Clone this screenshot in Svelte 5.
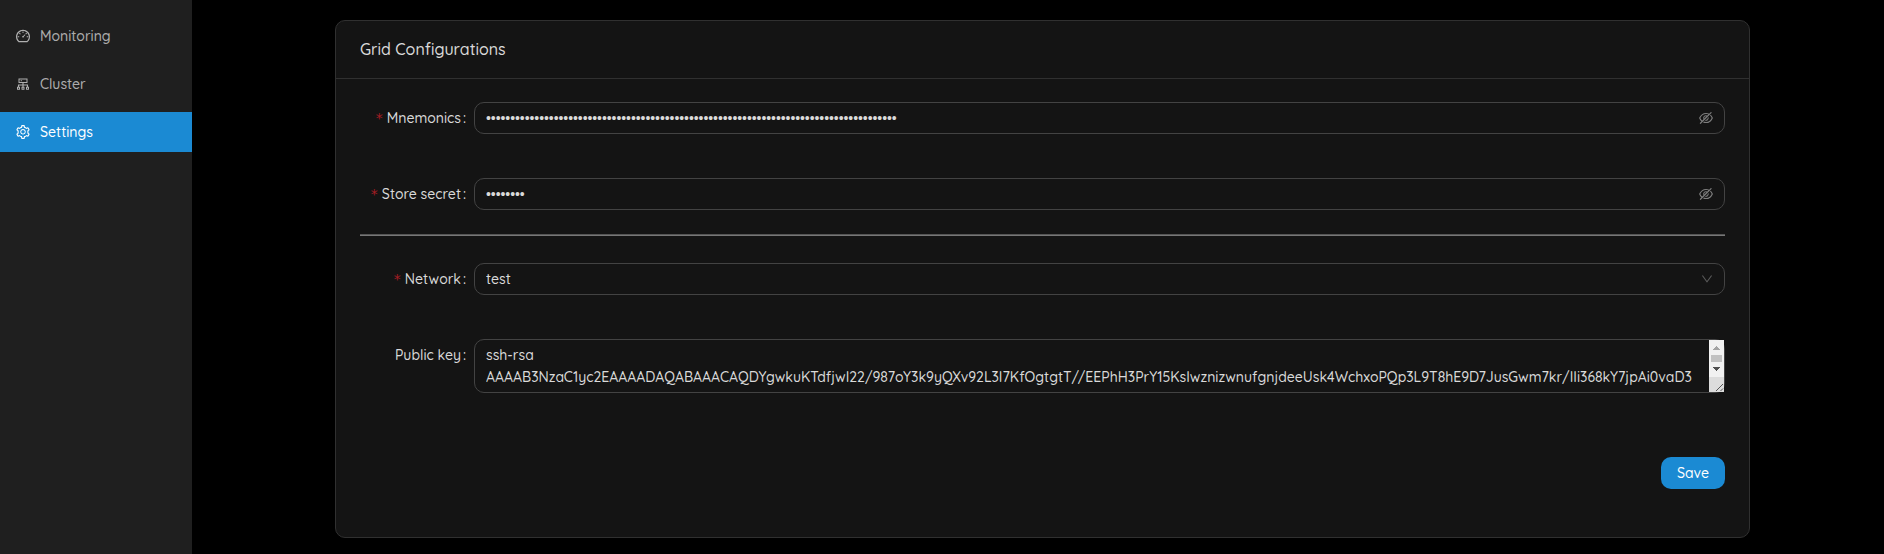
<script>
  const menu = [
    {
      label: 'Monitoring',
      path: 'M924.8 385.6a446.7 446.7 0 00-96-142.4 446.7 446.7 0 00-142.4-96C631.1 123.8 572.5 112 512 112s-119.1 11.8-174.4 35.2a446.7 446.7 0 00-142.4 96 446.7 446.7 0 00-96 142.4C75.8 440.9 64 499.5 64 560c0 132.7 58.3 257.7 159.9 343.1l1.7 1.4c5.8 4.8 13.1 7.5 20.6 7.5h531.7c7.5 0 14.8-2.7 20.6-7.5l1.7-1.4C901.7 817.7 960 692.7 960 560c0-60.5-11.9-119.1-35.2-174.4zM761.4 836H262.6A371.12 371.12 0 01140 560c0-99.4 38.7-192.8 109-263 70.3-70.3 163.7-109 263-109 99.4 0 192.8 38.7 263 109 70.3 70.3 109 163.7 109 263 0 105.6-44.5 205.5-122.6 276zM623.5 421.5a8.03 8.03 0 00-11.3 0L527.7 506c-18.7-5-39.4-.2-54.1 14.5a55.95 55.95 0 000 79.2 55.95 55.95 0 0079.2 0 55.87 55.87 0 0014.5-54.1l84.5-84.5c3.1-3.1 3.1-8.2 0-11.3l-28.3-28.3zM490 320h44c4.4 0 8-3.6 8-8v-80c0-4.4-3.6-8-8-8h-44c-4.4 0-8 3.6-8 8v80c0 4.4 3.6 8 8 8zm260 218v44c0 4.4 3.6 8 8 8h80c4.4 0 8-3.6 8-8v-44c0-4.4-3.6-8-8-8h-80c-4.4 0-8 3.6-8 8zm12.7-197.2l-31.1-31.1a8.03 8.03 0 00-11.3 0l-56.6 56.6a8.03 8.03 0 000 11.3l31.1 31.1c3.1 3.1 8.2 3.1 11.3 0l56.6-56.6c3.1-3.1 3.1-8.2 0-11.3zm-458.6-31.1a8.03 8.03 0 00-11.3 0l-31.1 31.1a8.03 8.03 0 000 11.3l56.6 56.6c3.1 3.1 8.2 3.1 11.3 0l31.1-31.1c3.1-3.1 3.1-8.2 0-11.3l-56.6-56.6zM262 530h-80c-4.4 0-8 3.6-8 8v44c0 4.4 3.6 8 8 8h80c4.4 0 8-3.6 8-8v-44c0-4.4-3.6-8-8-8z'
    },
    {
      label: 'Cluster',
      path: 'M888 680h-54V540H546v-92h238c8.8 0 16-7.2 16-16V168c0-8.8-7.2-16-16-16H240c-8.8 0-16 7.2-16 16v264c0 8.8 7.2 16 16 16h238v92H190v140h-54c-4.4 0-8 3.6-8 8v176c0 4.4 3.6 8 8 8h176c4.4 0 8-3.6 8-8V688c0-4.4-3.6-8-8-8h-54v-72h220v72h-54c-4.4 0-8 3.6-8 8v176c0 4.4 3.6 8 8 8h176c4.4 0 8-3.6 8-8V688c0-4.4-3.6-8-8-8h-54v-72h220v72h-54c-4.4 0-8 3.6-8 8v176c0 4.4 3.6 8 8 8h176c4.4 0 8-3.6 8-8V688c0-4.4-3.6-8-8-8zM256 808h-64v-64h64v64zm288 0h-64v-64h64v64zM288 384V216h448v168H288zm544 424h-64v-64h64v64zM360 300a40 40 0 1080 0 40 40 0 10-80 0z'
    },
    {
      label: 'Settings',
      active: true,
      path: 'M924.8 625.7l-65.5-56c3.1-19 4.7-38.4 4.7-57.8s-1.6-38.8-4.7-57.8l65.5-56a32.03 32.03 0 009.3-35.2l-.9-2.6a443.74 443.74 0 00-79.7-137.9l-1.8-2.1a32.12 32.12 0 00-35.1-9.5l-81.3 28.9c-30-24.6-63.5-44-99.7-57.6l-15.7-85a32.05 32.05 0 00-25.8-25.7l-2.7-.5c-52.1-9.4-106.9-9.4-159 0l-2.7.5a32.05 32.05 0 00-25.8 25.7l-15.8 85.4a351.86 351.86 0 00-99 57.4l-81.9-29.1a32 32 0 00-35.1 9.5l-1.8 2.1a446.02 446.02 0 00-79.7 137.9l-.9 2.6c-4.5 12.5-.8 26.5 9.3 35.2l66.3 56.6c-3.1 18.8-4.6 38-4.6 57.1 0 19.2 1.5 38.4 4.6 57.1L99 625.5a32.03 32.03 0 00-9.3 35.2l.9 2.6c18.1 50.4 44.9 96.9 79.7 137.9l1.8 2.1a32.12 32.12 0 0035.1 9.5l81.9-29.1c29.8 24.5 63.1 43.9 99 57.4l15.8 85.4a32.05 32.05 0 0025.8 25.7l2.7.5a449.4 449.4 0 00159 0l2.7-.5a32.05 32.05 0 0025.8-25.7l15.7-85a350 350 0 0099.7-57.6l81.3 28.9a32 32 0 0035.1-9.5l1.8-2.1c34.8-41.1 61.6-87.5 79.7-137.9l.9-2.6c4.5-12.3.8-26.3-9.3-35zM788.3 465.9c2.5 15.1 3.8 30.6 3.8 46.1s-1.3 31-3.8 46.1l-6.6 40.1 74.7 63.9a370.03 370.03 0 01-42.6 73.6L721 702.8l-31.4 25.8c-23.9 19.6-50.5 35-79.3 45.8l-38.1 14.3-17.9 97a377.5 377.5 0 01-85 0l-17.9-97.2-37.8-14.5c-28.5-10.8-55-26.2-78.7-45.7l-31.4-25.9-93.4 33.2c-17-22.9-31.2-47.6-42.6-73.6l75.5-64.5-6.5-40c-2.4-14.9-3.7-30.3-3.7-45.5 0-15.3 1.2-30.6 3.7-45.5l6.5-40-75.5-64.5c11.3-26.1 25.6-50.7 42.6-73.6l93.4 33.2 31.4-25.9c23.7-19.5 50.2-34.9 78.7-45.7l37.9-14.3 17.9-97.2c28.1-3.2 56.8-3.2 85 0l17.9 97 38.1 14.3c28.7 10.8 55.4 26.2 79.3 45.8l31.4 25.8 92.8-32.9c17 22.9 31.2 47.6 42.6 73.6L781.8 426l6.5 39.9zM512 326c-97.2 0-176 78.8-176 176s78.8 176 176 176 176-78.8 176-176-78.8-176-176-176zm79.2 255.2A111.6 111.6 0 01512 614c-29.9 0-58-11.7-79.2-32.8A111.6 111.6 0 01400 502c0-29.9 11.7-58 32.8-79.2C454 401.6 482.1 390 512 390c29.9 0 58 11.6 79.2 32.8A111.6 111.6 0 01624 502c0 29.9-11.7 58-32.8 79.2z'
    }
  ];
  const bullets = (n) => '•'.repeat(n);
</script>

{#snippet label(text, required)}
  <div class="label">
    {#if required}<span class="star">*</span>{/if}
    <span class="text">{text}</span><span class="colon">:</span>
  </div>
{/snippet}

{#snippet eye()}
  <svg class="eye" viewBox="64 64 896 896" width="14" height="14" fill="currentColor">
    <path d="M942.2 486.2Q889.47 375.11 816.7 305l-50.88 50.88C807.31 395.53 843.45 447.4 874.7 512 791.5 684.2 673.4 766 512 766q-72.67 0-133.87-22.38L323 798.75Q408 838 512 838q288.3 0 430.2-300.3a60.29 60.29 0 000-51.5zm-63.57-320.64L836 122.88a8 8 0 00-11.32 0L715.31 232.2Q624.86 186 512 186q-288.3 0-430.2 300.3a60.3 60.3 0 000 51.5q56.69 119.4 136.5 191.41L112.48 835a8 8 0 000 11.31L155.17 889a8 8 0 0011.31 0l712.15-712.12a8 8 0 000-11.32zM149.3 512C232.6 339.8 350.7 258 512 258c54.54 0 104.13 9.36 149.12 28.39l-70.3 70.3a176 176 0 00-238.13 238.13l-83.42 83.42C223.1 637.49 183.3 582.28 149.3 512zm246.7 0a112.11 112.11 0 01146.2-106.69L401.31 546.2A112 112 0 01396 512z" />
    <path d="M508 624c-3.46 0-6.87-.16-10.25-.47l-52.82 52.82a176.09 176.09 0 00227.42-227.42l-52.82 52.82c.31 3.38.47 6.79.47 10.25a111.94 111.94 0 01-112 112z" />
  </svg>
{/snippet}

<div class="layout">
  <nav>
    {#each menu as item}
      <div class="item" class:active={item.active}>
        <svg viewBox="64 64 896 896" width="14" height="14" fill="currentColor"><path d={item.path} /></svg>
        <span class="text">{item.label}</span>
      </div>
    {/each}
  </nav>
  <main>
    <section class="card">
      <header><span class="text">Grid Configurations</span></header>
      <div class="body">
        <div class="row">
          {@render label('Mnemonics', true)}
          <div class="field"><span class="dots">{bullets(85)}</span>{@render eye()}</div>
        </div>
        <div class="row secret">
          {@render label('Store secret', true)}
          <div class="field"><span class="dots">{bullets(8)}</span>{@render eye()}</div>
        </div>
        <div class="divider"></div>
        <div class="row network">
          {@render label('Network', true)}
          <div class="field">
            <span class="text">test</span>
            <svg class="down" viewBox="64 64 896 896" width="12" height="12" fill="currentColor"><path d="M884 256h-75c-5.1 0-9.9 2.5-12.9 6.6L512 654.2 227.9 262.6c-3-4.1-7.8-6.6-12.9-6.6h-75c-6.5 0-10.3 7.4-6.5 12.7l352.6 486.1c12.8 17.6 39 17.6 51.7 0l352.6-486.1c3.9-5.3.1-12.7-6.4-12.7z" /></svg>
          </div>
        </div>
        <div class="row key">
          {@render label('Public key', false)}
          <div class="field area">
            <div class="keytext">
              <div class="text">ssh-rsa</div>
              <div class="text">AAAAB3NzaC1yc2EAAAADAQABAAACAQDYgwkuKTdfjwI22/987oY3k9yQXv92L3I7KfOgtgtT//EEPhH3PrY15KsIwznizwnufgnjdeeUsk4WchxoPQp3L9T8hE9D7JusGwm7kr/IIi368kY7jpAi0vaD3</div>
            </div>
            <svg class="scroll" width="15" height="52" viewBox="0 0 15 52" shape-rendering="crispEdges">
              <path fill="#f1f1f1" d="M0 0h15v37H0z" />
              <path fill="#dcdcdc" d="M0 37h15v15H0z" />
              <path fill="#a3a3a3" d="M7 6h1v1h1v1h1v1h1v1H4V9h1V8h1V7h1z" />
              <path fill="#c1c1c1" d="M2 15h11v7H2z" />
              <path fill="#505050" d="M4 27h7v1h-1v1H9v1H8v1H7v-1H6v-1H5v-1H4z" />
              <path stroke="#555" fill="none" shape-rendering="auto" d="M7 51l7-7M11.5 51l2.5-2.5" />
            </svg>
          </div>
        </div>
        <div class="actions"><button><span class="text">Save</span></button></div>
      </div>
    </section>
  </main>
</div>

<style>
  :global(body) { margin: 0; background: #000; }
  .layout {
    display: flex;
    height: 554px;
    overflow: hidden;
    background: #000;
    color: rgba(255, 255, 255, 0.85);
    font: 500 14px/22px Quicksand, Lato, sans-serif;
  }
  .text { display: block; transform: scaleY(1.08); transform-origin: 0 16px; }
  nav {
    width: 192px;
    box-sizing: border-box;
    padding-top: 16px;
    display: flex;
    flex-direction: column;
    gap: 8px;
    flex: none;
    background: #1f1f1f;
  }
  .item {
    height: 40px;
    display: flex;
    align-items: center;
    gap: 10px;
    padding-left: 16px;
    color: rgba(255, 255, 255, 0.65);
  }
  .item.active { background: #1b8ad3; color: #fff; }
  svg { display: block; flex: none; }
  main { flex: 1; padding: 20px 134px 16px 143px; }
  .card {
    box-sizing: border-box;
    height: 518px;
    background: #141414;
    border: 1px solid #303030;
    border-radius: 10px;
  }
  header {
    height: 57px;
    box-sizing: content-box;
    display: flex;
    align-items: center;
    padding: 0 24px;
    border-bottom: 1px solid #303030;
    font-size: 16px;
  }
  header .text { margin-bottom: 1px; }
  .body { padding: 23px 24px 0; display: flex; flex-direction: column; }
  .row { display: flex; }
  .label {
    width: 114px;
    height: 32px;
    flex: none;
    display: flex;
    align-items: center;
    justify-content: flex-end;
    white-space: nowrap;
  }
  .star { color: #a61d24; margin-right: 4px; font-family: "DejaVu Sans", sans-serif; font-weight: 400; }
  .colon { margin: 0 8px 0 2px; }
  .field {
    flex: 1;
    min-width: 0;
    height: 32px;
    box-sizing: border-box;
    border: 1px solid #434343;
    border-radius: 10px;
    padding: 0 11px;
    display: flex;
    align-items: center;
    justify-content: space-between;
  }
  .dots { font-family: "Liberation Sans", sans-serif; font-weight: 400; letter-spacing: -0.07px; }
  .eye { color: rgba(255, 255, 255, 0.45); }
  .down { color: rgba(255, 255, 255, 0.3); }
  .secret { margin-top: 44px; }
  .divider { height: 1px; border-top: 1px solid #555; background: #777; margin-top: 24px; }
  .network { margin-top: 27px; }
  .key { margin-top: 44px; }
  .area { height: 54px; padding-right: 0; align-items: flex-start; }
  .keytext { padding-top: 4px; white-space: nowrap; }
  .actions { display: flex; justify-content: flex-end; margin-top: 64px; }
  button {
    width: 64px;
    height: 32px;
    border: 0;
    padding: 0;
    border-radius: 10px;
    background: #1b8ad3;
    color: #fff;
    font: inherit;
  }
</style>
